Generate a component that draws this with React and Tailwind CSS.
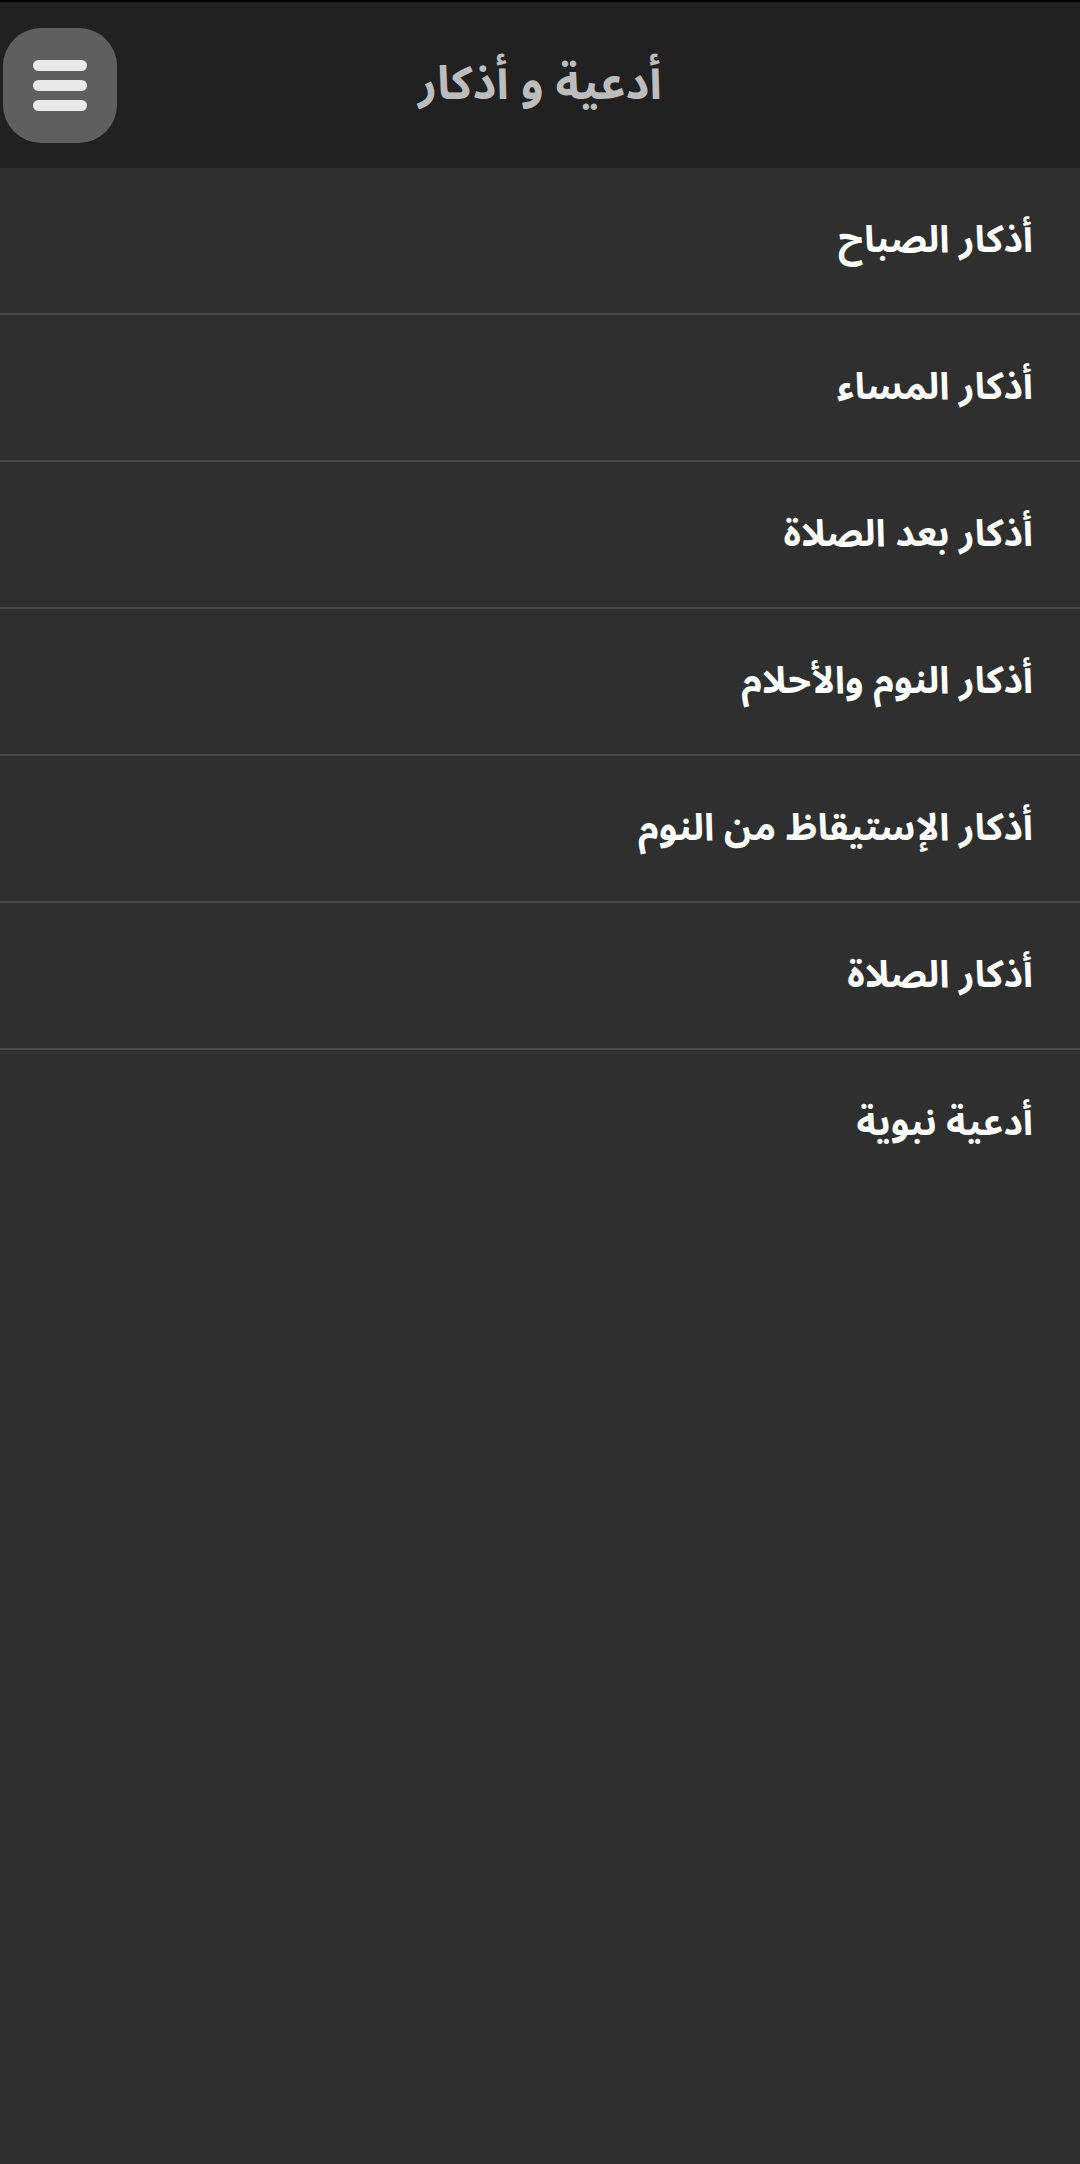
import React from "react";

const items = [
  "أذكار الصباح",
  "أذكار المساء",
  "أذكار بعد الصلاة",
  "أذكار النوم والأحلام",
  "أذكار الإستيقاظ من النوم",
  "أذكار الصلاة",
  "أدعية نبوية",
];

const font = { fontFamily: '"Noto Sans Arabic", "Noto Sans Arabic UI", "Noto Sans", "DejaVu Sans", sans-serif' };

export default function App() {
  return (
    <div className="min-h-[2164px] w-[1080px] bg-[#2f2f2f]" style={font}>
      <div className="h-[2px] bg-black" />
      <header className="relative flex h-[166px] items-center justify-center bg-[#212121]">
        <button className="absolute left-[3px] top-[26px] flex h-[115px] w-[114px] flex-col items-center justify-center gap-[9px] rounded-[38px] bg-[#5f5f5f]">
          <span className="h-[11px] w-[54px] rounded-full bg-[#e8e9e8]" />
          <span className="h-[11px] w-[54px] rounded-full bg-[#e8e9e8]" />
          <span className="h-[11px] w-[54px] rounded-full bg-[#e8e9e8]" />
        </button>
        <h1 dir="rtl" className="text-[46px] font-bold leading-none text-[#bdbdbd]">أدعية و أذكار</h1>
      </header>
      <ul dir="rtl">
        {items.map((t, i) => (
          <li
            key={i}
            className={`flex h-[147px] items-center pr-[47px] text-[37.5px] font-bold text-white ${i < items.length - 1 ? "border-b-2 border-[#4a4a4a]" : ""}`}
          >
            {t}
          </li>
        ))}
      </ul>
    </div>
  );
}
